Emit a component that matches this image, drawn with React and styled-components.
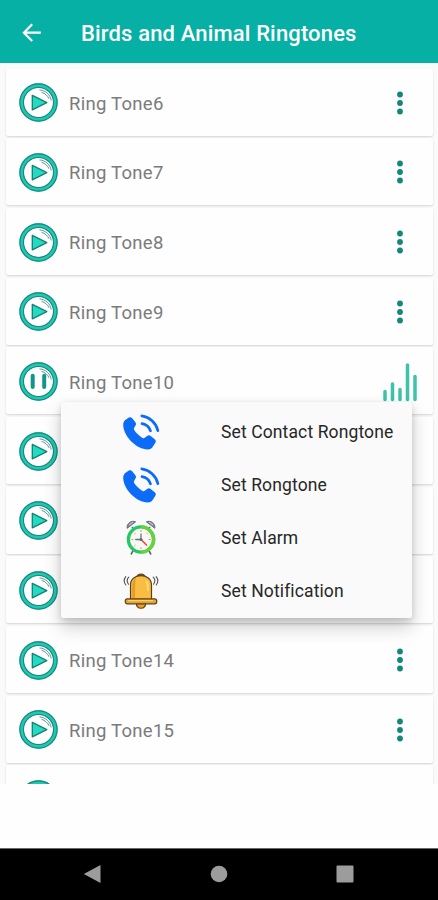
import React, { useState } from 'react'
import styled, { createGlobalStyle } from 'styled-components'

const GlobalStyle = createGlobalStyle`
    body {
        margin: 0;
        background-color: #fefefe;
        font-family: Roboto, "Noto Sans", sans-serif;
    }
    svg {
        display: block;
        flex-shrink: 0;
    }
    button {
        border: none;
        padding: 0;
        background: none;
        font: inherit;
        cursor: pointer;
    }
`;
const Screen = styled.div`
    position: relative;
    display: flex;
    flex-direction: column;
    width: 438px;
    height: 900px;
    overflow: hidden;
    background-color: #fefefe;
`;
const Header = styled.header`
    display: flex;
    align-items: center;
    flex-shrink: 0;
    height: 63px;
    box-sizing: border-box;
    padding: 2px 0 0 20px;
    gap: 37px;
    background-color: #07b0a5;
`;
const Title = styled.h1`
    margin: 2px 0 0;
    color: white;
    font-size: 22px;
    font-weight: 500;
    line-height: 28px;
    letter-spacing: 0.15px;
    white-space: nowrap;
`;
const List = styled.div`
    display: flex;
    flex-direction: column;
    gap: 2.7px;
    height: 721px;
    box-sizing: border-box;
    padding: 5.5px 5px 0 6px;
    overflow: hidden;
    background-color: #fafafa;
`;
const Card = styled.div`
    display: flex;
    align-items: center;
    flex-shrink: 0;
    height: 67px;
    box-sizing: border-box;
    padding: 1.5px 13px 0 13px;
    border-radius: 2px;
    background-color: #fefefe;
    box-shadow: 0 1px 2px rgba(0, 0, 0, 0.15);
`;
const PlayButton = styled.button`
    width: 39px;
    height: 39px;
`;
const CardName = styled.span`
    flex: 1;
    margin: 2px 0 0 11px;
    color: #7b7b7b;
    font-size: 18.5px;
    line-height: 24px;
    letter-spacing: 0.27px;
`;
const MoreButton = styled.button`
    width: 40px;
    height: 40px;
    display: flex;
    align-items: center;
    justify-content: center;
`;
const Menu = styled.div`
    position: absolute;
    left: 61px;
    top: 402px;
    width: 351px;
    height: 216px;
    box-sizing: border-box;
    padding-top: 3px;
    display: flex;
    flex-direction: column;
    border-radius: 2px;
    background-color: #fafafa;
    box-shadow: 0 9px 18px rgba(0, 0, 0, 0.2), 0 2px 6px rgba(0, 0, 0, 0.13);
`;
const MenuItem = styled.button`
    display: grid;
    grid-template-columns: 160px 1fr;
    align-items: center;
    height: 53.4px;
    text-align: left;
`;
const MenuIcon = styled.span`
    display: flex;
    justify-content: center;
`;
const MenuText = styled.span`
    color: #272727;
    font-size: 17.5px;
    line-height: 24px;
    letter-spacing: 0.12px;
    white-space: nowrap;
`;
const NavBar = styled.nav`
    display: flex;
    align-items: center;
    justify-content: space-between;
    height: 52px;
    margin-top: auto;
    box-sizing: border-box;
    padding: 0 84px 2px 83px;
    border-top: 1px solid #686868;
    background-color: black;
`;

const BackIcon = () => (
    <svg width="24" height="24" viewBox="0 0 24 24" fill="none" stroke="white" strokeWidth="2.2">
        <path d="M20.8 11.7H4.2M12.2 3.3L3.9 11.7L12.2 20" />
    </svg>
)

const CircleIcon = ({ playing }) => (
    <svg width="39" height="39" viewBox="0 0 39 39" fill="none">
        <circle cx="19.5" cy="19.5" r="17" stroke="#20c7b2" strokeWidth="4.4" />
        <circle cx="19.5" cy="19.5" r="18.6" stroke="#18877c" strokeWidth="1.1" />
        <circle cx="19.5" cy="19.5" r="15" stroke="#18877c" strokeWidth="1.1" />
        <path d="M20.5 6.9C26.5 7.4 31.3 11.6 32.2 17.5M22.5 9.3C26 10.3 29 13 30 15.8" stroke="#4a8f87" strokeWidth="0.9" />
        {playing
            ? <path d="M13.7 13.8V25M25.2 13.8V25" stroke="#14958a" strokeWidth="4" strokeLinecap="round" />
            : <path d="M13.3 12.4V26.8L27.8 19.6Z" fill="#21dbc2" stroke="#147f74" strokeWidth="1.3" strokeLinejoin="round" />}
    </svg>
)

const DotsIcon = () => (
    <svg width="8" height="24" viewBox="0 0 8 24" fill="#11887a">
        <circle cx="4" cy="3.5" r="2.9" />
        <circle cx="4" cy="12" r="2.9" />
        <circle cx="4" cy="20.5" r="2.9" />
    </svg>
)

const BarsIcon = () => (
    <svg width="36" height="40" viewBox="0 0 36 40" fill="none" stroke="#3fc1aa" strokeWidth="3.5" strokeLinecap="round">
        <path d="M3 37.4V29.5M10.5 37.4V22M18 37.4V27.5M25.5 37.4V3M33 37.4V14.5" />
    </svg>
)

const PhoneIcon = () => (
    <svg width="38" height="38" viewBox="0 0 38 38">
        <path d="M2.6 7.4L6.8 4.6Q8.8 3.6 10.4 5.4L13.4 9.2Q14.8 10.9 13.5 12.6L12.2 14.8Q11.6 15.9 12.2 17C14 19.9 17.3 23.1 20.5 24.9Q21.7 25.5 22.8 24.7L25.4 22.8Q27 21.8 28.7 23L33 26.4Q34.6 27.9 33.4 29.8L31.1 33.3Q29.3 36.5 25.7 36.5C14.6 36.2 2 24.1 1.2 12.5Q1 9.4 2.6 7.4Z" fill="#0c6cf8" />
        <path d="M20 10.6C24.2 11.3 27.3 14 28.5 17.8M19.8 2.9C27.6 4 34 9.9 35.9 17.6" fill="none" stroke="#0c6cf8" strokeWidth="2.7" strokeLinecap="round" />
    </svg>
)

const AlarmIcon = () => (
    <svg width="36" height="38" viewBox="0 0 36 38" fill="none">
        <path d="M10.4 31L8 35.5M25.6 31L28 35.5" stroke="#606b70" strokeWidth="1.6" />
        <path d="M9 8L11.5 12M27 8L24.5 12" stroke="#667" strokeWidth="1.5" />
        <path d="M4.2 9.3C3.3 4.8 8.1 0.8 12.7 2.8ZM31.8 9.3C32.7 4.8 27.9 0.8 23.3 2.8Z" fill="#858b94" stroke="#555c63" strokeWidth="0.8" />
        <path d="M6 6L10 3M30 6L26 3" stroke="#d5d8dc" strokeWidth="1" />
        <circle cx="18" cy="20.5" r="12.6" fill="#f9f8f3" stroke="#25c768" strokeWidth="3.4" />
        <path d="M18 7.9A12.6 12.6 0 0 1 18 33.1" stroke="#65d43b" strokeWidth="3.4" />
        <path d="M18 11V13M18 28V30M8.5 20.5H10.5M25.5 20.5H27.5M11.3 13.8L12.5 15M24.7 13.8L23.5 15M11.3 27.2L12.5 26" stroke="#c9a27b" strokeWidth="1" />
        <path d="M18 14.5V20.5H12.2" stroke="#70757d" strokeWidth="1.3" />
        <path d="M17.5 20L24 26.5" stroke="#ef4545" strokeWidth="1.6" />
        <circle cx="18" cy="20.5" r="1.5" fill="#65697a" />
    </svg>
)

const BellIcon = () => (
    <svg width="36" height="38" viewBox="0 0 36 38" fill="none" stroke="#59411d" strokeWidth="1.2" strokeLinejoin="round">
        <path d="M14.2 5.2C14.3 0.9 21.7 0.9 21.8 5.2Z" fill="#98651d" />
        <path d="M13.3 31C13.5 38 22.5 38 22.7 31Z" fill="#e7a12d" />
        <path d="M7.5 27.5V13C7.5 0.5 28.5 0.5 28.5 13V27.5Z" fill="#f8bd42" />
        <path d="M9.2 26.5V13.5C9.2 9.6 11.2 7.3 13 6.3C11.9 10 12.2 20 12 26.5Z" fill="#e49c30" stroke="none" />
        <path d="M23.3 9.5C24.6 11 24.9 14 24.9 18" stroke="#ffdc79" strokeWidth="1.8" strokeLinecap="round" />
        <rect x="2.3" y="26.8" width="31.4" height="5" rx="2" fill="#eba52f" />
        <path d="M5 28.6H30" stroke="#ffd16b" />
        <path d="M5.8 5.2C3.9 7 3.9 10 5.5 12.2M2.8 4.6C0.7 7.3 0.8 10.4 2.8 13M30.2 5.2C32.1 7 32.1 10 30.5 12.2M33.2 4.6C35.3 7.3 35.2 10.4 33.2 13" stroke="#57534e" strokeWidth="1.1" strokeLinecap="round" />
    </svg>
)

const tones = [6, 7, 8, 9, 10, 11, 12, 13, 14, 15]

const menuItems = [
    { text: 'Set Contact Rongtone', Icon: PhoneIcon },
    { text: 'Set Rongtone', Icon: PhoneIcon },
    { text: 'Set Alarm', Icon: AlarmIcon },
    { text: 'Set Notification', Icon: BellIcon },
]

export default function App() {
    const [playing, setPlaying] = useState(10)
    const [openMenu, setOpenMenu] = useState(true)

    return (
        <Screen>
            <GlobalStyle />
            <Header>
                <BackIcon />
                <Title>Birds and Animal Ringtones</Title>
            </Header>
            <List>
                {tones.map((tone) => (
                    <Card key={tone}>
                        <PlayButton onClick={() => setPlaying(playing === tone ? null : tone)}>
                            <CircleIcon playing={playing === tone} />
                        </PlayButton>
                        <CardName>Ring Tone{tone}</CardName>
                        <MoreButton onClick={() => setOpenMenu(!openMenu)}>
                            {playing === tone ? <BarsIcon /> : <DotsIcon />}
                        </MoreButton>
                    </Card>
                ))}
                {/* next row, only its top edge shows */}
                <Card>
                    <PlayButton><CircleIcon /></PlayButton>
                </Card>
            </List>
            {openMenu && (
                <Menu>
                    {menuItems.map(({ text, Icon }) => (
                        <MenuItem key={text} onClick={() => setOpenMenu(false)}>
                            <MenuIcon><Icon /></MenuIcon>
                            <MenuText>{text}</MenuText>
                        </MenuItem>
                    ))}
                </Menu>
            )}
            <NavBar>
                <svg width="18" height="20" viewBox="0 0 18 20" fill="#9c9c9c"><path d="M0.8 10L17.5 1V19Z" /></svg>
                <svg width="18" height="18" viewBox="0 0 18 18" fill="#9c9c9c"><circle cx="9" cy="9" r="8.3" /></svg>
                <svg width="18" height="18" viewBox="0 0 18 18" fill="#9c9c9c"><rect x="0.5" y="0.5" width="17" height="17" rx="1" /></svg>
            </NavBar>
        </Screen>
    )
}
